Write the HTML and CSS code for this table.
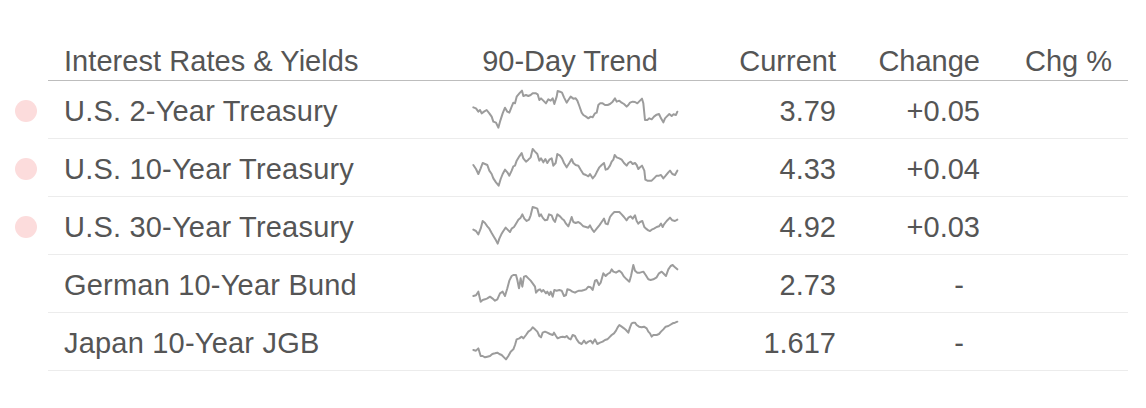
FILE: index.html
```html
<!DOCTYPE html>
<html lang="en">
<head>
<meta charset="utf-8">
<title>Interest Rates &amp; Yields</title>
<link rel="stylesheet" href="styles.css">
</head>
<body>
<div class="rates">
  <div class="row head">
    <div class="marker"></div>
    <div class="cells">
      <div class="c name">Interest Rates &amp; Yields</div>
      <div class="c trend-h">90-Day Trend</div>
      <div class="c num">Current</div>
      <div class="c num">Change</div>
      <div class="c num">Chg %</div>
    </div>
  </div>

  <div class="row">
    <div class="marker"><span class="dot"></span></div>
    <div class="cells">
      <div class="c name">U.S. 2-Year Treasury</div>
      <div class="trend">
        <svg width="220" height="57" viewBox="0 3 660 171"><polyline points="40,82 48,85 55,95 60,90 65,100 72,95 80,90 88,100 95,110 100,125 108,128 115,143 120,125 128,100 135,83 142,95 148,98 155,80 160,68 165,70 170,50 180,38 186,32 190,48 198,45 205,48 212,45 218,40 228,40 233,43 238,60 243,55 250,62 258,70 265,58 272,62 278,55 283,72 290,50 293,33 300,35 306,38 312,52 320,68 325,60 332,50 340,56 347,55 352,62 358,78 365,98 370,105 378,110 385,115 392,110 398,112 405,100 410,98 415,75 420,70 428,70 435,75 443,75 450,72 458,65 465,55 470,65 478,62 485,68 492,72 500,80 505,75 510,68 518,65 525,66 532,70 540,62 546,56 550,70 555,120 562,120 568,115 575,118 582,110 590,104 597,102 603,115 610,127 615,115 620,110 628,102 635,108 640,103 648,105 652,95"/></svg>
      </div>
      <div class="c num">3.79</div>
      <div class="c num">+0.05</div>
      <div class="c num"></div>
    </div>
  </div>

  <div class="row">
    <div class="marker"><span class="dot"></span></div>
    <div class="cells">
      <div class="c name">U.S. 10-Year Treasury</div>
      <div class="trend">
        <svg width="220" height="57" viewBox="0 0 660 171"><polyline points="40,78 48,90 55,105 62,88 68,72 75,75 82,78 88,95 95,105 100,118 108,130 116,140 122,120 128,105 135,92 142,100 148,110 155,95 160,82 165,80 170,65 178,52 185,42 190,58 198,68 205,62 212,55 218,30 225,38 232,45 238,65 243,58 250,70 256,60 262,72 268,62 275,58 280,80 287,72 292,45 300,50 306,58 312,72 320,85 328,72 335,60 340,72 347,78 355,80 362,92 370,105 378,108 385,112 390,105 398,118 405,110 410,100 418,85 425,78 432,72 437,92 443,90 450,80 455,68 460,62 464,48 470,55 478,58 485,62 492,72 500,80 505,72 512,68 518,75 525,72 530,78 535,90 540,85 546,80 553,95 556,122 562,125 568,125 575,125 582,118 590,110 597,110 603,108 610,118 617,110 625,100 630,95 637,105 645,108 652,95"/></svg>
      </div>
      <div class="c num">4.33</div>
      <div class="c num">+0.04</div>
      <div class="c num"></div>
    </div>
  </div>

  <div class="row">
    <div class="marker"><span class="dot"></span></div>
    <div class="cells">
      <div class="c name">U.S. 30-Year Treasury</div>
      <div class="trend">
        <svg width="220" height="57" viewBox="0 0 660 171"><polyline points="40,98 48,102 55,112 62,95 68,72 75,78 82,88 88,95 95,108 102,120 108,130 113,140 118,125 124,112 130,102 137,92 145,100 150,105 155,95 162,90 168,80 175,68 182,62 187,52 193,65 200,72 207,68 212,55 218,30 225,32 232,35 238,58 243,52 248,62 255,70 262,68 267,52 275,55 280,68 285,75 292,52 300,58 306,65 312,70 318,80 325,88 330,75 335,60 340,75 347,78 355,75 362,80 370,88 378,90 385,92 390,85 395,95 402,105 410,95 418,85 425,75 432,65 437,80 443,82 450,60 456,52 463,45 470,45 478,45 485,52 492,60 500,70 505,62 512,58 518,65 525,55 530,72 535,80 540,75 547,72 553,90 558,95 565,100 570,102 575,98 582,95 590,90 597,88 603,80 608,90 612,82 620,72 630,62 637,70 645,72 652,68"/></svg>
      </div>
      <div class="c num">4.92</div>
      <div class="c num">+0.03</div>
      <div class="c num"></div>
    </div>
  </div>

  <div class="row">
    <div class="marker"></div>
    <div class="cells">
      <div class="c name">German 10-Year Bund</div>
      <div class="trend">
        <svg width="220" height="57" viewBox="0 15 660 171"><polyline points="40,138 48,136 55,125 62,155 68,150 75,148 82,145 90,140 97,145 105,152 112,148 120,130 128,125 135,138 142,115 148,92 155,78 160,75 168,75 172,90 177,115 182,85 187,110 192,80 198,78 205,85 212,92 218,100 225,110 228,128 235,120 240,118 245,125 250,120 258,130 262,125 268,135 272,125 278,140 283,120 290,122 298,120 305,122 312,138 318,135 322,118 330,120 337,125 345,128 350,125 357,122 365,122 372,120 378,118 385,110 392,112 398,120 405,92 410,90 417,105 422,98 430,70 437,78 443,72 450,68 455,58 460,65 468,68 478,62 485,68 492,80 500,88 508,95 513,78 520,45 525,62 532,68 540,68 550,65 557,75 565,88 572,90 580,88 590,82 597,70 605,65 612,72 618,78 625,58 632,48 638,45 645,52 652,58"/></svg>
      </div>
      <div class="c num">2.73</div>
      <div class="c num"><span class="dash">-</span></div>
      <div class="c num"></div>
    </div>
  </div>

  <div class="row">
    <div class="marker"></div>
    <div class="cells">
      <div class="c name">Japan 10-Year JGB</div>
      <div class="trend">
        <svg width="220" height="57" viewBox="0 189 660 171"><polyline points="40,300 48,302 55,295 62,318 68,318 75,322 82,320 90,318 97,312 105,310 112,308 118,312 125,315 132,322 138,328 145,318 152,305 160,298 165,285 170,268 178,265 185,260 190,265 198,255 205,245 212,240 218,232 225,238 232,245 238,258 243,262 248,248 255,245 262,248 270,252 278,255 282,248 288,258 293,265 300,262 308,260 315,262 320,258 326,265 332,268 338,255 345,258 350,268 357,278 365,282 372,272 378,280 385,275 392,272 398,280 405,268 412,282 420,278 428,275 435,270 442,268 448,262 455,255 462,250 468,242 473,232 478,225 485,230 492,235 498,240 505,248 510,232 515,220 520,218 525,218 530,225 537,230 545,232 552,230 560,235 565,245 570,250 575,260 580,255 590,255 597,252 603,245 610,238 617,230 625,228 630,225 638,220 645,218 652,215"/></svg>
      </div>
      <div class="c num">1.617</div>
      <div class="c num"><span class="dash">-</span></div>
      <div class="c num"></div>
    </div>
  </div>
</div>
</body>
</html>
```

FILE: styles.css
```css
html, body {
  margin: 0;
  padding: 0;
  background: #ffffff;
}

body {
  font-family: "Liberation Sans", Arial, sans-serif;
  font-size: 29px;
  color: #555555;
}

.rates {
  width: 1128px;
  padding-top: 44px;
}

.row {
  display: flex;
}

.marker {
  width: 48px;
  flex: none;
  display: flex;
  align-items: center;
  padding-left: 15px;
  padding-top: 1px;
  box-sizing: border-box;
}

.dot {
  width: 22px;
  height: 22px;
  border-radius: 50%;
  background: #fcdcdc;
}

.cells {
  flex: 1;
  display: grid;
  grid-template-columns: 412px 220px 172px 144px 132px;
  height: 58px;
  box-sizing: border-box;
  border-bottom: 1px solid #ececec;
}

.head .cells {
  height: 37px;
  border-bottom: 1px solid #bdbdbd;
}

.c {
  display: flex;
  align-items: center;
  padding-top: 2px;
  line-height: 34px;
  white-space: nowrap;
}

.head .c {
  align-items: flex-start;
  padding-top: 0;
}

.name {
  padding-left: 16px;
  letter-spacing: 0.2px;
}

.head .name {
  letter-spacing: 0.05px;
}

.trend-h {
  justify-content: center;
}

.num {
  justify-content: flex-end;
  padding-right: 16px;
}

.dash {
  margin-right: 16px;
}

.trend {
  display: flex;
  align-items: flex-start;
}

.trend svg {
  display: block;
}

.trend polyline {
  fill: none;
  stroke: #9c9c9c;
  stroke-width: 6;
  stroke-linejoin: round;
  stroke-linecap: round;
}
```
